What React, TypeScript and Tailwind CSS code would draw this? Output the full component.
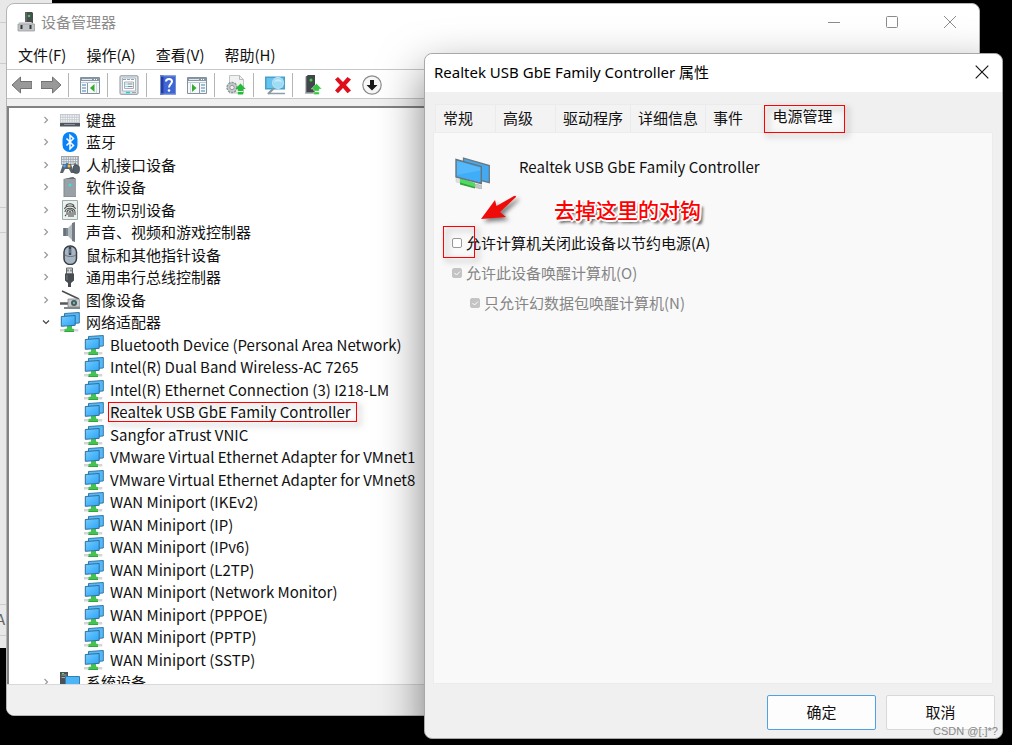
import type { ReactNode } from 'react';

const Monitors = ({ className = 'size-5' }: { className?: string }) => (
  <svg viewBox="0 0 20 20" className={`${className} shrink-0`} aria-hidden="true">
    <defs>
      <linearGradient id="screen" x1="0" y1="0" x2="1" y2="1">
        <stop offset="0" stopColor="#7ccbfc" />
        <stop offset="0.5" stopColor="#4fb8fb" />
        <stop offset="1" stopColor="#2fa2f6" />
      </linearGradient>
    </defs>
    <path d="M4.500 1.500 19.300.5V11L4.500 12z" fill="#55b9f9" stroke="#3579a6" />
    <path d="M0 17h18.300v2.500H0z" fill="#d4d6d6" />
    <path d="M7 14h5v2.500l2 .5v3H4.500v-3l2.500-.500z" fill="#46c252" />
    <path d="M4.500 19.500H14" stroke="#2fa83f" />
    <path d="M1.300 4.500 15.200 3.500v9.800L1.300 14.300z" fill="url(#screen)" stroke="#2c6f9b" />
  </svg>
);

const LargeMonitors = () => (
  <svg viewBox="0 0 36 32" className="w-9 h-8 shrink-0" aria-hidden="true">
    <path d="M8.500 1.200 34.300 8.500v17.200L8.500 19z" fill="#43aaf1" stroke="#6c7880" strokeWidth="1.300" />
    <path d="M1 21.500l4 1v3.500L1 25z" fill="#dfe1e2" stroke="#c2c5c6" strokeWidth=".5" />
    <path d="m5 21 15 5v5L5 27z" fill="#52d95f" />
    <path d="m5 25.500 15 4.500v1.500L5 27.500z" fill="#2fa53b" />
    <path d="m20.500 27 6 1.500v3.500l-6-1.500z" fill="#c6c9ca" stroke="#a1a6a8" strokeWidth=".6" />
    <path d="M1 2.500 26.300 9.500v17L1 20z" fill="#3fadf8" stroke="#68747c" strokeWidth="1.400" />
    <path d="M2 4 25.300 10.500v3L2 18z" fill="#6cc3fb" opacity=".5" />
  </svg>
);

const icons: Record<string, ReactNode> = {
  keyboard: (
    <>
      <path d="M0 4h20v9H0z" fill="#c3c9ce" />
      <path d="M0 13h20v3.500H0z" fill="#4e575e" />
      <path d="M1 6h18M1 8.500h18M1 11h18" stroke="#f7f8f8" strokeWidth="1.400" strokeDasharray="1.500 .8" />
      <path d="M4 14.500h11" stroke="#8b949b" />
    </>
  ),
  bluetooth: (
    <>
      <rect x="2.500" width="15" height="20" rx="7" fill="#0883f7" />
      <path d="m6.500 6.500 7 7-3.500 3.300V3.200L13.500 6.500l-7 7" fill="none" stroke="#fff" strokeWidth="1.500" />
    </>
  ),
  hid: (
    <>
      <path d="M1 1h18v9H1z" fill="#9ca5ac" />
      <path d="M2 3h16M2 5.500h16M2 8h16" stroke="#f3f4f5" strokeWidth="1.300" strokeDasharray="1.500 .8" />
      <path d="M3 9h8l3 9h-3l-2-4H5l-2 4H0z" fill="#59636c" />
      <path d="M15 8v3" stroke="#444" />
      <rect x="13" y="10" width="6.500" height="8.500" rx="3" fill="#54606a" stroke="#363e44" strokeWidth=".6" />
      <circle cx="4.500" cy="11" r="1.400" fill="#45a7ff" />
      <circle cx="9" cy="11" r="1.500" fill="#f4b63d" />
      <circle cx="7" cy="9" r="1.200" fill="#287fce" />
    </>
  ),
  software: (
    <>
      <path d="m4 2 9-2 3 2v18H4z" fill="#99a1a7" />
      <path d="m4 2 9-2 3 2z" fill="#686f76" />
      <path d="M4 2v18h12" fill="none" stroke="#7f878d" />
      <circle cx="10" cy="8" r="1.500" fill="#41dbe1" />
    </>
  ),
  fingerprint: (
    <>
      <path d="M2.500.5h15v19h-15z" fill="#edf0ee" stroke="#96b3a8" />
      <path
        d="M6 6c1-3 7-3 8 0M4.500 9c1-4 10-4 11 0M5 12c0-5 10-5 10 0v3M7 15v-3c0-3 6-3 6 0v5M9 17v-4c0-2 2-2 2 0v4M5 15l1 1"
        fill="none"
        stroke="#484e4b"
        strokeWidth="1.100"
      />
    </>
  ),
  speaker: (
    <>
      <path d="M3 6h5v8H3z" fill="#7f8a93" />
      <path d="m8 6 5-5v18l-5-5z" fill="#b2bac0" />
      <path d="m12 1 3-1v20l-3-1z" fill="#747d84" />
      <path d="M5 6v8" stroke="#505c64" />
    </>
  ),
  mouse: (
    <>
      <rect x="4" y="1" width="12.500" height="18.500" rx="6" fill="#a8b5c3" stroke="#363e47" strokeWidth="1.500" />
      <path d="M5 10c3 2 8 2 11 0" fill="none" stroke="#647280" />
      <path d="M10 2v8" stroke="#39434e" strokeWidth="2.500" />
      <path d="M10 4v4" stroke="#8ea1b3" />
    </>
  ),
  usb: (
    <>
      <path d="M6.500 1h6v6h-6z" fill="#d7dadc" stroke="#62686b" />
      <path d="M8 2.500v2m3-2v2" stroke="#444" />
      <path d="M5 6.500h9v7l-3 2.500v4H8v-4l-3-2.500z" fill="#474c50" />
      <path d="M7 8v5" stroke="#747c81" />
    </>
  ),
  camera: (
    <>
      <path d="m2 1 17 8" stroke="#4b4e4f" strokeWidth="1.500" />
      <path d="M0 13.500h9" stroke="#555a5e" strokeWidth="2.500" />
      <path d="M8 9h11l1 2v6H8z" fill="#c5caca" stroke="#83898b" strokeWidth=".8" />
      <path d="M4 18h16" stroke="#81888b" strokeWidth="2" />
      <circle cx="14" cy="13" r="3" fill="#4e5859" />
      <circle cx="14" cy="13" r="1.200" fill="#56bfc7" />
    </>
  ),
  system: (
    <>
      <path d="M0 0h8v19H0z" fill="#4c5155" />
      <path d="M1.500 3h5M1.500 5.500h5" stroke="#9ea6ab" />
      <path d="M2 1.500h2" stroke="#55e35f" />
      <path d="M5.500 4.500h14v10h-14z" fill="#4bb5f8" stroke="#337eac" />
    </>
  ),
  back: (
    <path d="M0 10 8.500 2v4.500H20v7H8.500V18z" fill="#999" stroke="#686868" strokeWidth=".9" />
  ),
  forward: (
    <path d="M20 10 11.500 2v4.500H0v7h11.500V18z" fill="#999" stroke="#686868" strokeWidth=".9" />
  ),
  consoleTree: (
    <>
      <path d="M.5 2.500h19v16H.5z" fill="#f7f8f9" stroke="#82919f" />
      <path d="M1 3h18v3H1z" fill="#8797a5" />
      <path d="M2 4.500h10" stroke="#dfe6ec" />
      <path d="M14 4.500h4" stroke="#fff" strokeDasharray="1 1" />
      <path d="M1 7.500h18" stroke="#becbd5" />
      <path d="M7.500 8v10" stroke="#8b98a4" />
      <path d="M2 10h4M2 13h4M2 16h4" stroke="#4583b1" />
      <path d="m10 13 4.500-4v8z" fill="#36ab31" />
      <path d="M16.500 8v10" stroke="#d2d8dd" />
    </>
  ),
  properties: (
    <>
      <rect x="1" y=".8" width="18" height="18.500" rx="1" fill="#e0e5e9" stroke="#8a949d" />
      <path d="M3.500 3h13v13h-13z" fill="#fff" stroke="#adb8c0" />
      <path d="M4 4.500h12" stroke="#8da4b5" strokeDasharray="3 1" />
      <path d="M5.500 7h9v6.500h-9z" fill="#f6f7f8" stroke="#a5b0ba" />
      <path d="M8.500 9h5m-5 2.500h5" stroke="#7d8993" />
      <path d="M6.500 9h1m-1 2.500h1" stroke="#3dace8" />
      <path d="M7 17.500h4" stroke="#23c9ed" strokeWidth="1.500" />
      <path d="M13 17.500h4" stroke="#9aa5af" />
    </>
  ),
  help: (
    <>
      <path d="M2 .5h16v19H2z" fill="#3f66d4" />
      <path d="M2 .5h3.500v19H2z" fill="#233e9f" />
      <path d="M2.500 1h15v18h-15z" fill="none" stroke="#7690d1" />
      <path d="M8 6.500C8 3 14 3 14 6.500c0 2.500-3 2.500-3 6" fill="none" stroke="#fff" strokeWidth="2" />
      <circle cx="11" cy="15.500" r="1.300" fill="#fff" />
    </>
  ),
  actionPane: (
    <>
      <path d="M.5 2.500h19v16H.5z" fill="#f7f8f9" stroke="#82919f" />
      <path d="M1 3h18v3H1z" fill="#8797a5" />
      <path d="M2 4.500h10" stroke="#dfe6ec" />
      <path d="M14 4.500h4" stroke="#fff" strokeDasharray="1 1" />
      <path d="M1 7.500h18" stroke="#becbd5" />
      <path d="M3.500 8v10" stroke="#d2d8dd" />
      <path d="M9.500 13 5 9v8z" fill="#36ab31" />
      <path d="M12.500 8v10" stroke="#8b98a4" />
      <path d="M14 10h4M14 13h4M14 16h4" stroke="#4583b1" />
    </>
  ),
  updateDriver: (
    <>
      <path d="M3.500.5h10l4 4V18h-14z" fill="#f0f1f1" stroke="#c0c3c5" />
      <path d="M13.500.5v4h4" fill="none" stroke="#b4b8ba" />
      <circle cx="6" cy="12.500" r="5" fill="#c5c9cc" stroke="#8e9498" strokeWidth="1.400" strokeDasharray="2.200 1" />
      <circle cx="6" cy="12.500" r="2.200" fill="#eee" stroke="#92999e" />
      <path d="m14.500 8.500 5.300 5.500h-2.600v2h-5.400v-2H9.200zM11.800 17h5.400v2.500h-5.400z" fill="#23bd38" />
    </>
  ),
  scan: (
    <>
      <path d="M0 1.500h20v13H0z" fill="#459fcf" />
      <path d="M1.500 3h17v10h-17z" fill="#65c3ee" />
      <path d="M4 18.500h16" stroke="#8ba0ac" strokeWidth="1.500" />
      <path d="m9 13-6 6" stroke="#86999f" strokeWidth="2.200" />
      <circle cx="13" cy="8" r="5.500" fill="#9bdcf7" stroke="#b5dcee" strokeWidth="1.300" />
      <path d="M9 7c2-4 7-3 8 0-3-1-5-1-8 0" fill="#c6edfc" />
    </>
  ),
  enable: (
    <>
      <path d="M2 1.500 4 0h7v18H2z" fill="#42464a" />
      <path d="M2 1.500V18" stroke="#858b8f" />
      <circle cx="7" cy="5" r="1.500" fill="#31dc30" />
      <path d="M1 18h10" stroke="#a0a4a7" strokeWidth="1.500" />
      <path d="m12.500 8.500 5.300 5.500h-2.600v2H9.800v-2H7.200zM9.800 17h5.400v2.500H9.800z" fill="#34c541" stroke="#f3fff3" strokeWidth=".4" />
    </>
  ),
  uninstall: (
    <path d="M2 4.500 5 2l5 5 4.500-5L18 4.500 13 10l5 5.500-3.500 2.800L10 13l-5 5.300-3-2.800L7 10z" fill="#e00d1b" />
  ),
  disable: (
    <>
      <circle cx="10" cy="10" r="9.200" fill="#f7f7f7" stroke="#8c8c8c" strokeWidth="1.200" />
      <path d="M8 5h4v5h3.500L10 15.500 4.500 10H8z" fill="#191919" />
    </>
  ),
};

const Icon = ({ name }: { name: string }) =>
  name === 'network' ? (
    <Monitors />
  ) : (
    <svg viewBox="0 0 20 20" className="size-5 shrink-0" aria-hidden="true">
      {icons[name]}
    </svg>
  );

const toolbar = [
  [['back', '后退'], ['forward', '前进']],
  [['consoleTree', '显示/隐藏控制台树']],
  [['properties', '属性']],
  [['help', '帮助'], ['actionPane', '显示/隐藏操作窗格']],
  [['updateDriver', '更新驱动程序']],
  [['scan', '扫描检测硬件改动']],
  [['enable', '启用设备'], ['uninstall', '卸载设备'], ['disable', '禁用设备']],
];

const categories = [
  ['keyboard', '键盘'],
  ['bluetooth', '蓝牙'],
  ['hid', '人机接口设备'],
  ['software', '软件设备'],
  ['fingerprint', '生物识别设备'],
  ['speaker', '声音、视频和游戏控制器'],
  ['mouse', '鼠标和其他指针设备'],
  ['usb', '通用串行总线控制器'],
  ['camera', '图像设备'],
  ['network', '网络适配器'],
];

const adapters = [
  'Bluetooth Device (Personal Area Network)',
  'Intel(R) Dual Band Wireless-AC 7265',
  'Intel(R) Ethernet Connection (3) I218-LM',
  'Realtek USB GbE Family Controller',
  'Sangfor aTrust VNIC',
  'VMware Virtual Ethernet Adapter for VMnet1',
  'VMware Virtual Ethernet Adapter for VMnet8',
  'WAN Miniport (IKEv2)',
  'WAN Miniport (IP)',
  'WAN Miniport (IPv6)',
  'WAN Miniport (L2TP)',
  'WAN Miniport (Network Monitor)',
  'WAN Miniport (PPPOE)',
  'WAN Miniport (PPTP)',
  'WAN Miniport (SSTP)',
];

const Mark = ({ className }: { className: string }) => (
  <span
    className={`absolute border border-[#f00] pointer-events-none drop-shadow-[3px_3px_3px_rgba(0,0,0,0.5)] ${className}`}
  ></span>
);

const Category = ({ icon, label }: { icon: string; label: string }) => {
  const open = icon === 'network';
  return (
    <li className="flex items-center pl-[31px] odd:h-[23px] even:h-[22px]">
      <button aria-label={label} aria-expanded={open} className="w-3 mr-2 flex justify-center">
        <svg viewBox="0 0 8 8" className="size-2" fill="none" stroke={open ? '#444' : '#999'} strokeWidth="1.2">
          <path d={open ? 'M1 2.500 4 5.500 7 2.500' : 'M2.500 1 5.500 4 2.500 7'} />
        </svg>
      </button>
      <Icon name={icon} />
      <span className="ml-1.5">{label}</span>
    </li>
  );
};

const DeviceManager = () => (
  <main className="absolute left-1.5 right-8 top-[3px] bottom-[29px] flex flex-col bg-white rounded-lg overflow-hidden border border-[#b5b5b5]">
    <header className="flex items-center h-[35px] shrink-0 pl-2.5 text-[#8c8c8c]">
      <svg viewBox="0 0 20 20" className="size-5" aria-hidden="true">
        <path d="M8 0h7l1 1v11H8z" fill="#4a4d4f" />
        <path d="M9 0v11" stroke="#777c7e" />
        <circle cx="12" cy="4" r="1.300" fill="#38d34e" />
        <path d="M2 10h12l3 2v7H2z" fill="#d5d8d9" />
        <path d="M1 12h16.500v7H1z" fill="#c0c4c5" stroke="#9ba0a2" strokeWidth=".8" />
        <path d="M4.500 13v4m9-4v4" stroke="#34383a" strokeWidth="2" />
      </svg>
      <h1 className="ml-1 flex-1">设备管理器</h1>
      <button aria-label="最小化" className="w-[58px] flex justify-center">
        <svg viewBox="0 0 14 14" className="size-3.5" stroke="currentColor"><path d="M1 7.500h12" /></svg>
      </button>
      <button aria-label="最大化" className="w-[58px] flex justify-center">
        <svg viewBox="0 0 14 14" className="size-3.5" stroke="currentColor" fill="none"><rect x="1.500" y="1.500" width="11" height="11" rx="1" /></svg>
      </button>
      <button aria-label="关闭" className="w-[58px] flex justify-center">
        <svg viewBox="0 0 14 14" className="size-3.5" stroke="currentColor"><path d="m1 1 12 12M13 1 1 13" /></svg>
      </button>
    </header>
    <nav className="flex items-center h-[30px] shrink-0 pt-0.5 pl-[11px] gap-5">
      <button>文件(F)</button>
      <button>操作(A)</button>
      <button>查看(V)</button>
      <button>帮助(H)</button>
    </nav>
    <div className="flex h-[30px] shrink-0 pt-px border-y border-[#c5c7cb]">
      {toolbar.map((group, i) => (
        <div key={i} className="flex items-center">
          {i > 0 && <span className="w-px h-6 ml-[3px] mr-1.5 bg-[#b5b5b5]"></span>}
          {group.map(([name, label]) => (
            <button key={name} aria-label={label} className="w-[29px] flex justify-center">
              <Icon name={name} />
            </button>
          ))}
        </div>
      ))}
    </div>
    <div className="h-[7px] shrink-0 bg-[#f0f0f0]"></div>
    <div className="flex-1 min-h-0 overflow-hidden border-t-2 border-l-2 border-[#828282]">
      <ul>
        {categories.map(([icon, label]) => (
          <Category key={label} icon={icon} label={label} />
        ))}
        {adapters.map((name) => (
          <li key={name} className="flex items-center pl-[75px] odd:h-[23px] even:h-[22px]">
            <Icon name="network" />
            <span className="relative ml-1.5">
              {name}
              {name.startsWith('Realtek') && <Mark className="-left-0.5 -right-1.5 inset-y-0" />}
            </span>
          </li>
        ))}
        <Category icon="system" label="系统设备" />
      </ul>
    </div>
    <footer className="h-[31px] shrink-0 bg-[#f0f0f0] border-t border-[#d9d9d9]"></footer>
  </main>
);

const PowerOption = ({ label, indent, disabled, mark }: { label: string; indent?: boolean; disabled?: boolean; mark?: boolean }) => (
  <label className={`relative flex items-center gap-1 h-[30px] ${indent ? 'pl-9' : 'pl-[18px]'} ${disabled ? 'text-[#858585]' : ''}`}>
    <input
      type="checkbox"
      defaultChecked={disabled}
      disabled={disabled}
      className="appearance-none size-2.5 rounded-xs border border-[#999] bg-white disabled:border-[#c4c4c4] disabled:bg-[#c4c4c4]"
    />
    {disabled && (
      <svg viewBox="0 0 10 10" className={`absolute size-2.5 ${indent ? 'left-9' : 'left-[18px]'}`} fill="none" stroke="#fff">
        <path d="m2.500 5 2 2L8 3.500" />
      </svg>
    )}
    {label}
    {mark && <Mark className="left-[9px] -top-0.5 w-8 h-8" />}
  </label>
);

const tabs = [
  { label: '常规', width: 'w-15' },
  { label: '高级', width: 'w-15' },
  { label: '驱动程序', width: 'w-[75px]' },
  { label: '详细信息', width: 'w-[75px]' },
  { label: '事件', width: 'w-[57px]' },
];

const PropertiesDialog = () => (
  <section
    role="dialog"
    aria-labelledby="dialog-title"
    className="absolute left-[424px] right-[9px] top-[53px] bottom-1.5 flex flex-col rounded-lg bg-[#f0f0f0] border border-[#a8a8a8] shadow-[0_18px_45px_rgba(0,0,0,0.5)]"
  >
    <header className="flex items-center h-[38px] shrink-0 pl-[9px] pr-3 pb-0.5 bg-white rounded-t-lg">
      <h2 id="dialog-title" className="flex-1 text-black font-['Noto_Sans','Noto_Sans_CJK_SC',sans-serif]">Realtek USB GbE Family Controller 属性</h2>
      <button aria-label="关闭">
        <svg viewBox="0 0 14 14" className="size-4" stroke="currentColor"><path d="m1.500 1.500 11 11M12.500 1.500l-11 11" /></svg>
      </button>
    </header>
    <div className="flex-1 flex flex-col px-2 pt-3">
      <div role="tablist" className="flex items-end h-7 pl-0.5">
        {tabs.map(({ label, width }) => (
          <button key={label} role="tab" className={`h-7 pl-[7px] pb-0.5 text-left bg-[#f3f3f3] border border-b-0 border-r-0 border-[#ebebeb] ${width}`}>
            {label}
          </button>
        ))}
        <button role="tab" aria-selected="true" className="relative z-10 h-7 w-[81px] ml-0.5 pr-1 pb-1 bg-[#f9f9f9]">
          电源管理
          <Mark className="inset-x-0 top-px -bottom-px" />
        </button>
      </div>
      <div role="tabpanel" className="relative flex-1 mr-px bg-[#f9f9f9] border border-[#ececec]">
        <div className="flex items-start pl-[21px] pt-6 gap-7">
          <LargeMonitors />
          <span>Realtek USB GbE Family Controller</span>
        </div>
        <div className="pt-[39px]">
          <PowerOption label="允许计算机关闭此设备以节约电源(A)" mark />
          <PowerOption label="允许此设备唤醒计算机(O)" disabled />
          <PowerOption label="只允许幻数据包唤醒计算机(N)" disabled indent />
        </div>
        <svg viewBox="0 0 38 26" className="absolute left-[46px] top-[62px] w-[38px] h-[26px] drop-shadow-[3px_3px_2px_rgba(0,0,0,0.5)]" aria-hidden="true">
          <path d="M1 24 15 5l1.500 6L34 1q2-1 2 1L20 17l6 5z" fill="#f00b0b" />
        </svg>
        <p className="absolute left-30 top-[62px] text-[21px] leading-7 font-medium text-[#f00] [text-shadow:2px_0_0_#fff,-2px_0_0_#fff,0_2px_0_#fff,0_-2px_0_#fff,1px_1px_0_#fff,-1px_-1px_0_#fff,3px_3px_3px_#333]">
          去掉这里的对钩
        </p>
      </div>
    </div>
    <footer className="flex justify-end gap-2.5 pt-[11px] pb-2 pr-[7px]">
      <button className="w-[109px] h-[35px] pb-0.5 rounded-xs bg-[#fdfdfd] border border-[#4fa3e3]">确定</button>
      <button className="w-[109px] h-[35px] pb-0.5 rounded-xs bg-[#fdfdfd] border border-[#d8d8d8]">取消</button>
    </footer>
  </section>
);

const App = () => (
  <div className="relative min-h-screen overflow-hidden bg-black text-[15px] leading-5 whitespace-nowrap text-[#111] font-['Noto_Sans_CJK_SC',sans-serif]">
    <div className="absolute left-0 top-0 w-[52px] h-[648px] bg-[#e8e8e8] overflow-hidden" aria-hidden="true">
      <div className="mt-[22px] h-[42px] border-y border-[#ccc]"></div>
      <div className="mt-[143px] h-[26px] border-y border-[#ccc]"></div>
      <div className="mt-[371px] h-8 border-y border-[#ccc] -ml-1 text-[#666] leading-7">A</div>
    </div>
    <DeviceManager />
    <PropertiesDialog />
    <p className="absolute right-3.5 bottom-1.5 text-[11px] leading-4 text-[#888] font-['Liberation_Sans',sans-serif]">CSDN @[.]*?</p>
  </div>
);

export default App;
